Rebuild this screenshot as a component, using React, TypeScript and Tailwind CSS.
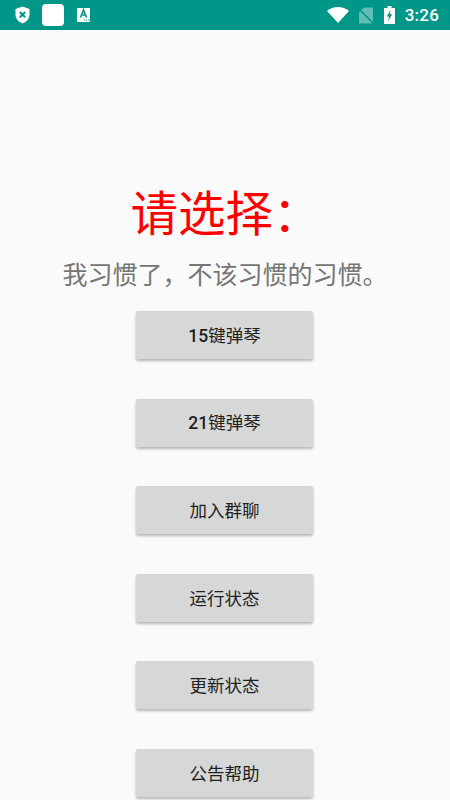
import React from "react";

const cjk = "font-['Roboto','Noto_Sans_CJK_SC',sans-serif]";

const buttons = [
  { num: "15", label: "键弹琴" },
  { num: "21", label: "键弹琴" },
  { num: "", label: "加入群聊" },
  { num: "", label: "运行状态" },
  { num: "", label: "更新状态" },
  { num: "", label: "公告帮助" },
];

function StatusBar() {
  return (
    <div className="flex h-[30px] shrink-0 items-center bg-[#009688] pl-[15px] pr-[11px] text-white">
      <svg width="15" height="18" viewBox="0 0 15 18" className="mr-[12px]">
        <path d="M7.5 0.5 L14.5 3 V8.5 C14.5 12.8 11.5 16 7.5 17.5 C3.5 16 0.5 12.8 0.5 8.5 V3 Z" fill="#fff" />
        <path d="M4.8 6 L10.2 11.4 M10.2 6 L4.8 11.4" stroke="#009688" strokeWidth="2" />
      </svg>
      <div className="mr-[12px] h-[22px] w-[22px] rounded-[4px] bg-white" />
      <svg width="15" height="16" viewBox="0 0 15 16">
        <path d="M1 1 H14 V13.5 C14 14.5 13.5 15 12.5 15 H2.5 C1.5 15 1 14.5 1 13.5 Z" fill="#fff" />
        <path d="M4.5 10.5 L7.5 3 L10.5 10.5 M5.5 8 H9.5" stroke="#009688" strokeWidth="1.6" fill="none" />
        <path d="M8 13 H9.2 M10 13 H11.2 M12 13 H13" stroke="#009688" strokeWidth="1.2" />
      </svg>
      <div className="flex-1" />
      <svg width="22" height="16" viewBox="0 0 22 16" className="mr-[8px]">
        <path d="M0 4 C6 -1.2 16 -1.2 22 4 L11 16 Z" fill="#fff" />
      </svg>
      <svg width="18" height="17" viewBox="0 0 18 17" className="mr-[9px]">
        <path d="M7 0.5 H16 V16.5 H2 V5.5 Z" fill="#fff" fillOpacity="0.38" />
        <path d="M1 1 L17 17" stroke="#009688" strokeWidth="1.6" />
      </svg>
      <svg width="11" height="18" viewBox="0 0 11 18" className="mr-[10px]">
        <path d="M3.5 0 H7.5 V2 H11 V18 H0 V2 H3.5 Z" fill="#fff" />
        <path d="M6.5 4 L2.8 10.5 H5 L4.2 15 L8.2 8.2 H5.9 Z" fill="#009688" />
      </svg>
      <span className="font-['Roboto',sans-serif] text-[17px] font-medium leading-none tracking-[0.2px]">3:26</span>
    </div>
  );
}

export default function App() {
  return (
    <div className={`flex h-[800px] w-[450px] flex-col overflow-hidden bg-[#fafafa] ${cjk}`}>
      <StatusBar />
      <div className="flex flex-col items-center pt-[153px]">
        <h1 className="h-[64px] pl-[1px] text-[47.5px] font-normal leading-[64px] text-[#ff0000]">请选择：</h1>
        <p className="mt-[13px] h-[32px] text-[25px] leading-[32px] text-[#757575]">我习惯了，不该习惯的习惯。</p>
        <div className="mt-[19px] mr-[1px] flex flex-col gap-[39.6px]">
          {buttons.map((b) => (
            <button
              key={b.label + b.num}
              className="flex h-[48px] w-[177px] items-center justify-center rounded-[2px] bg-[#d6d7d7] pt-[3px] text-[17.5px] leading-none text-[#1f1f1f] shadow-[0_2px_3px_rgba(0,0,0,0.28)]"
            >
              {b.num ? <span className="font-medium">{b.num}</span> : null}
              {b.label}
            </button>
          ))}
        </div>
      </div>
    </div>
  );
}
